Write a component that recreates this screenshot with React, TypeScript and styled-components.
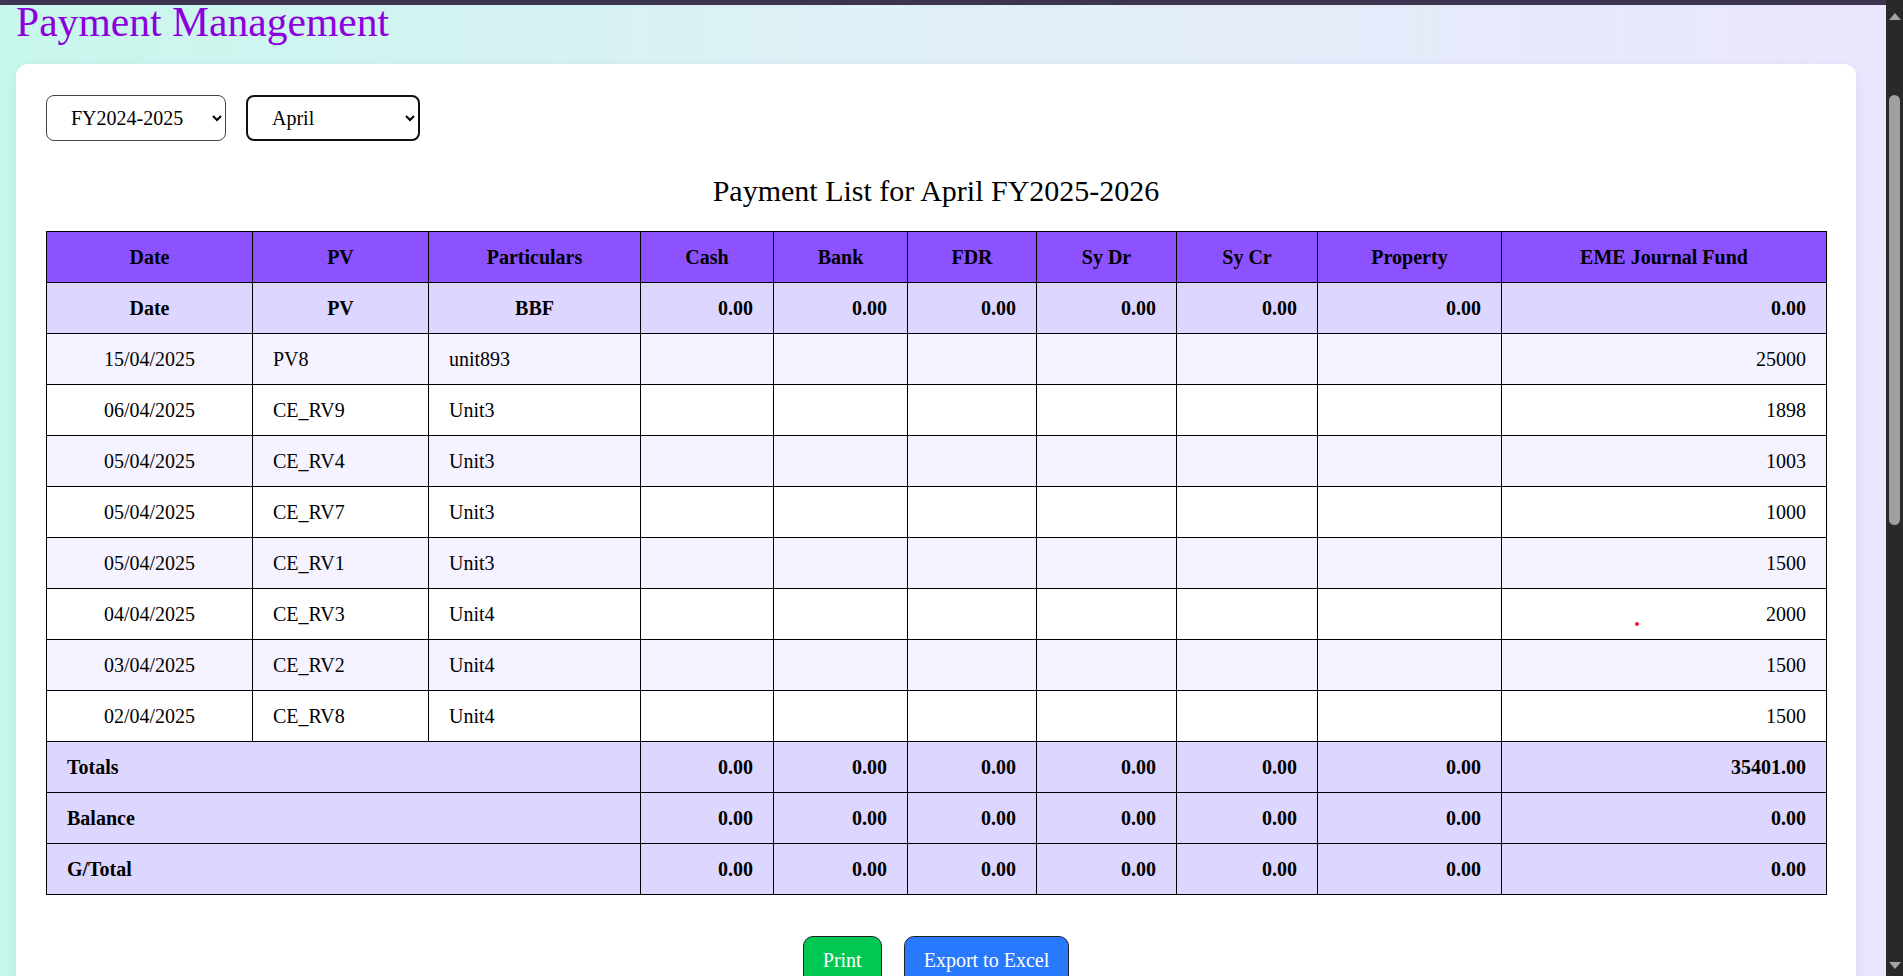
import React from "react";
import styled, { createGlobalStyle } from "styled-components";

const GlobalStyle = createGlobalStyle`
  html, body {
    margin: 0;
    padding: 0;
    height: 100%;
    overflow: hidden;
  }
  body {
    font-family: "Liberation Serif", "Times New Roman", serif;
    color: #000;
  }
  #root {
    height: 100%;
  }
`;

const Shell = styled.div`
  display: flex;
  height: 100vh;
  background: linear-gradient(to right, #c7f7ec 0%, #dff0f6 45%, #ebe6fd 100%);
`;

const Viewport = styled.div`
  flex: 1;
  min-width: 0;
  display: flex;
  flex-direction: column;
  overflow: hidden;
`;

const TopBar = styled.div`
  height: 5px;
  flex-shrink: 0;
  background: #3d3550;
`;

const Main = styled.main`
  padding: 0 30px 0 16px;
`;

const Title = styled.h1`
  margin: 0;
  font-size: 41.6px;
  line-height: 34px;
  font-weight: 400;
  color: #8c00dc;
`;

const Card = styled.section`
  margin-top: 25px;
  background: #ffffff;
  border-radius: 12px;
  box-shadow: 0 4px 14px rgba(90, 70, 160, 0.08);
  padding: 31px 30px 60px;
`;

const Filters = styled.div`
  display: flex;
  gap: 20px;
`;

const Select = styled.select<{ $w: number; $active?: boolean }>`
  box-sizing: border-box;
  width: ${(p) => p.$w}px;
  height: 46px;
  padding: 0 0 0 20px;
  font-family: "Liberation Serif", "Times New Roman", serif;
  font-size: 20px;
  color: #000;
  background: #fff;
  border: ${(p) => (p.$active ? "2px solid #111" : "1px solid #444")};
  border-radius: 8px;
  outline: none;
`;

const Heading = styled.h2`
  margin: 33px 0 23px;
  font-size: 30px;
  line-height: 34px;
  font-weight: 400;
  text-align: center;
`;

const Table = styled.table`
  width: 100%;
  table-layout: fixed;
  border-collapse: collapse;
  border: 1px solid #000;
  font-size: 20px;
  line-height: 24px;
`;

type Tone = "head" | "sum" | "odd" | "even";
const toneBg: Record<Tone, string> = {
  head: "#8c52ff",
  sum: "#ddd6fe",
  odd: "#f5f3ff",
  even: "#ffffff",
};

const Row = styled.tr<{ $tone: Tone }>`
  background: ${(p) => toneBg[p.$tone]};
`;

const HeadCell = styled.th`
  padding: 13px 20px;
  border: 1px solid #000;
  font-weight: 700;
  text-align: center;
`;

const Cell = styled.td<{ $align?: "left" | "center" | "right"; $bold?: boolean }>`
  position: relative;
  padding: 13px 20px;
  border: 1px solid #000;
  text-align: ${(p) => p.$align ?? "left"};
  font-weight: ${(p) => (p.$bold ? 700 : 400)};
  white-space: nowrap;
`;

const Dot = styled.span`
  position: absolute;
  left: 133px;
  top: 33px;
  width: 4px;
  height: 4px;
  border-radius: 50%;
  background: #ff1030;
`;

const Actions = styled.div`
  display: flex;
  justify-content: center;
  gap: 22px;
  margin-top: 41px;
`;

const ActionButton = styled.button<{ $color: string }>`
  padding: 12px 19px;
  font-family: "Liberation Serif", "Times New Roman", serif;
  font-size: 20px;
  line-height: 23px;
  color: #fff;
  background: ${(p) => p.$color};
  border: 1px solid #222;
  border-radius: 10px;
  cursor: pointer;
`;

const ScrollRail = styled.div`
  width: 17px;
  flex-shrink: 0;
  display: flex;
  flex-direction: column;
  background: #292929;
`;

const ArrowButton = styled.div<{ $h: number }>`
  height: ${(p) => p.$h}px;
  flex-shrink: 0;
  display: flex;
  align-items: center;
  justify-content: center;
`;

const Triangle = styled.span<{ $down?: boolean }>`
  width: 0;
  height: 0;
  border-left: 6px solid transparent;
  border-right: 6px solid transparent;
  ${(p) =>
    p.$down ? "border-top: 7px solid #a3a3a3;" : "border-bottom: 7px solid #a3a3a3;"}
`;

const Track = styled.div`
  flex: 1;
  display: flex;
  flex-direction: column;
  align-items: center;
`;

const Thumb = styled.div`
  margin-top: 63px;
  width: 11px;
  height: 430px;
  border-radius: 6px;
  background: #9f9f9f;
`;

const columns = [206, 176, 212, 133, 134, 129, 140, 141, 184, 325];
const headers = [
  "Date",
  "PV",
  "Particulars",
  "Cash",
  "Bank",
  "FDR",
  "Sy Dr",
  "Sy Cr",
  "Property",
  "EME Journal Fund",
];

const entries = [
  ["15/04/2025", "PV8", "unit893", "25000"],
  ["06/04/2025", "CE_RV9", "Unit3", "1898"],
  ["05/04/2025", "CE_RV4", "Unit3", "1003"],
  ["05/04/2025", "CE_RV7", "Unit3", "1000"],
  ["05/04/2025", "CE_RV1", "Unit3", "1500"],
  ["04/04/2025", "CE_RV3", "Unit4", "2000"],
  ["03/04/2025", "CE_RV2", "Unit4", "1500"],
  ["02/04/2025", "CE_RV8", "Unit4", "1500"],
];

const summaries: [string, string[]][] = [
  ["Totals", ["0.00", "0.00", "0.00", "0.00", "0.00", "0.00", "35401.00"]],
  ["Balance", ["0.00", "0.00", "0.00", "0.00", "0.00", "0.00", "0.00"]],
  ["G/Total", ["0.00", "0.00", "0.00", "0.00", "0.00", "0.00", "0.00"]],
];

export default function App() {
  return (
    <>
      <GlobalStyle />
      <Shell>
        <Viewport>
          <TopBar />
          <Main>
            <Title>Payment Management</Title>
            <Card>
              <Filters>
                <Select $w={180} defaultValue="FY2024-2025">
                  <option>FY2024-2025</option>
                  <option>FY2025-2026</option>
                </Select>
                <Select $w={174} $active defaultValue="April">
                  <option>April</option>
                  <option>May</option>
                  <option>June</option>
                </Select>
              </Filters>
              <Heading>Payment List for April FY2025-2026</Heading>
              <Table>
                <colgroup>
                  {columns.map((w, i) => (
                    <col key={i} style={{ width: w }} />
                  ))}
                </colgroup>
                <thead>
                  <Row $tone="head">
                    {headers.map((h) => (
                      <HeadCell key={h}>{h}</HeadCell>
                    ))}
                  </Row>
                </thead>
                <tbody>
                  <Row $tone="sum">
                    <Cell $align="center" $bold>Date</Cell>
                    <Cell $align="center" $bold>PV</Cell>
                    <Cell $align="center" $bold>BBF</Cell>
                    {Array.from({ length: 7 }).map((_, i) => (
                      <Cell key={i} $align="right" $bold>0.00</Cell>
                    ))}
                  </Row>
                  {entries.map((e, i) => (
                    <Row key={i} $tone={i % 2 === 0 ? "odd" : "even"}>
                      <Cell $align="center">{e[0]}</Cell>
                      <Cell>{e[1]}</Cell>
                      <Cell>{e[2]}</Cell>
                      {Array.from({ length: 6 }).map((_, j) => (
                        <Cell key={j} />
                      ))}
                      <Cell $align="right">
                        {e[3]}
                        {i === 5 && <Dot />}
                      </Cell>
                    </Row>
                  ))}
                  {summaries.map(([label, vals]) => (
                    <Row key={label} $tone="sum">
                      <Cell colSpan={3} $bold>{label}</Cell>
                      {vals.map((v, j) => (
                        <Cell key={j} $align="right" $bold>{v}</Cell>
                      ))}
                    </Row>
                  ))}
                </tbody>
              </Table>
              <Actions>
                <ActionButton $color="#00c853">Print</ActionButton>
                <ActionButton $color="#2979ff">Export to Excel</ActionButton>
              </Actions>
            </Card>
          </Main>
        </Viewport>
        <ScrollRail>
          <ArrowButton $h={32}>
            <Triangle />
          </ArrowButton>
          <Track>
            <Thumb />
          </Track>
          <ArrowButton $h={22}>
            <Triangle $down />
          </ArrowButton>
        </ScrollRail>
      </Shell>
    </>
  );
}
